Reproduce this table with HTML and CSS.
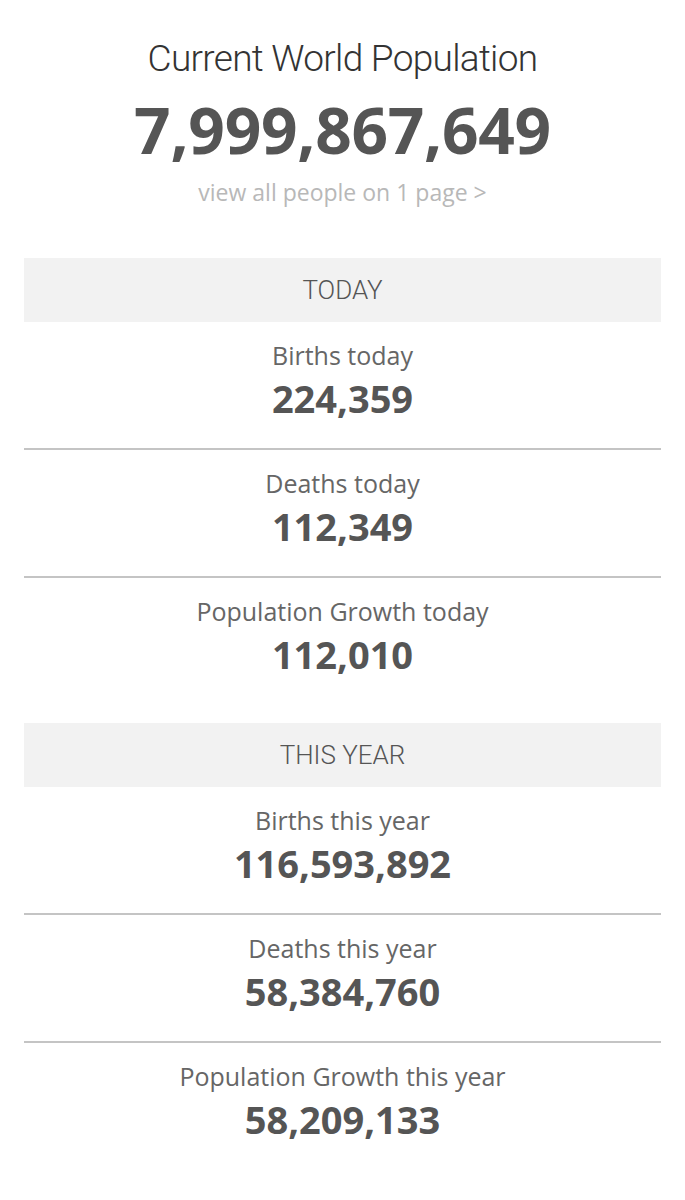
FILE: index.html
```html
<!DOCTYPE html>
<html>
<head>
<meta charset="utf-8">
<link rel="stylesheet" href="styles.css">
</head>
<body>
<div class="page">
  <header class="hero">
    <h1 class="hero-title">Current World Population</h1>
    <div class="hero-count">7,999,867,649</div>
    <a class="hero-link">view all people on 1 page &gt;</a>
  </header>

  <section class="group">
    <div class="band">TODAY</div>
    <div class="stat">
      <div class="stat-label">Births today</div>
      <div class="stat-value">224,359</div>
    </div>
    <div class="stat">
      <div class="stat-label">Deaths today</div>
      <div class="stat-value">112,349</div>
    </div>
    <div class="stat">
      <div class="stat-label">Population Growth today</div>
      <div class="stat-value">112,010</div>
    </div>
  </section>

  <section class="group">
    <div class="band">THIS YEAR</div>
    <div class="stat">
      <div class="stat-label">Births this year</div>
      <div class="stat-value">116,593,892</div>
    </div>
    <div class="stat">
      <div class="stat-label">Deaths this year</div>
      <div class="stat-value">58,384,760</div>
    </div>
    <div class="stat">
      <div class="stat-label">Population Growth this year</div>
      <div class="stat-value">58,209,133</div>
    </div>
  </section>
</div>
</body>
</html>
```

FILE: styles.css
```css
* { box-sizing: border-box; }
html, body { margin: 0; padding: 0; background: #ffffff; }
body { font-family: "Open Sans", "Liberation Sans", sans-serif; color: #555; }

.page {
  width: 685px;
  padding: 0 24px;
  display: flex;
  flex-direction: column;
}

.hero {
  display: flex;
  flex-direction: column;
  align-items: center;
  padding-top: 37px;
  height: 258px;
}
.hero-title {
  margin: 0;
  font-family: Roboto, "Liberation Sans", sans-serif;
  font-weight: 300;
  font-size: 37px;
  line-height: 44px;
  letter-spacing: -0.7px;
  color: #333;
}
.hero-count {
  margin-top: 13px;
  font-weight: 700;
  font-size: 64px;
  line-height: 72px;
  letter-spacing: -0.3px;
  color: #555;
}
.hero-link {
  margin-top: 11px;
  font-size: 23px;
  line-height: 30px;
  color: #b8b8b8;
  text-decoration: none;
}

.group {
  display: flex;
  flex-direction: column;
}
.group + .group { margin-top: 17px; }

.band {
  height: 64px;
  background: #f2f2f2;
  display: flex;
  align-items: center;
  justify-content: center;
  font-family: Roboto, "Liberation Sans", sans-serif;
  font-weight: 300;
  font-size: 26px;
  color: #555;
}

.stat {
  display: flex;
  flex-direction: column;
  align-items: center;
  height: 128px;
  padding-top: 17px;
  border-bottom: 2px solid #c4c4c4;
}
.stat:last-child { border-bottom: none; }

.stat-label {
  font-size: 25px;
  line-height: 32px;
  color: #666;
}
.stat-value {
  margin-top: 5px;
  font-weight: 700;
  font-size: 38px;
  line-height: 44px;
  color: #555;
}
```
